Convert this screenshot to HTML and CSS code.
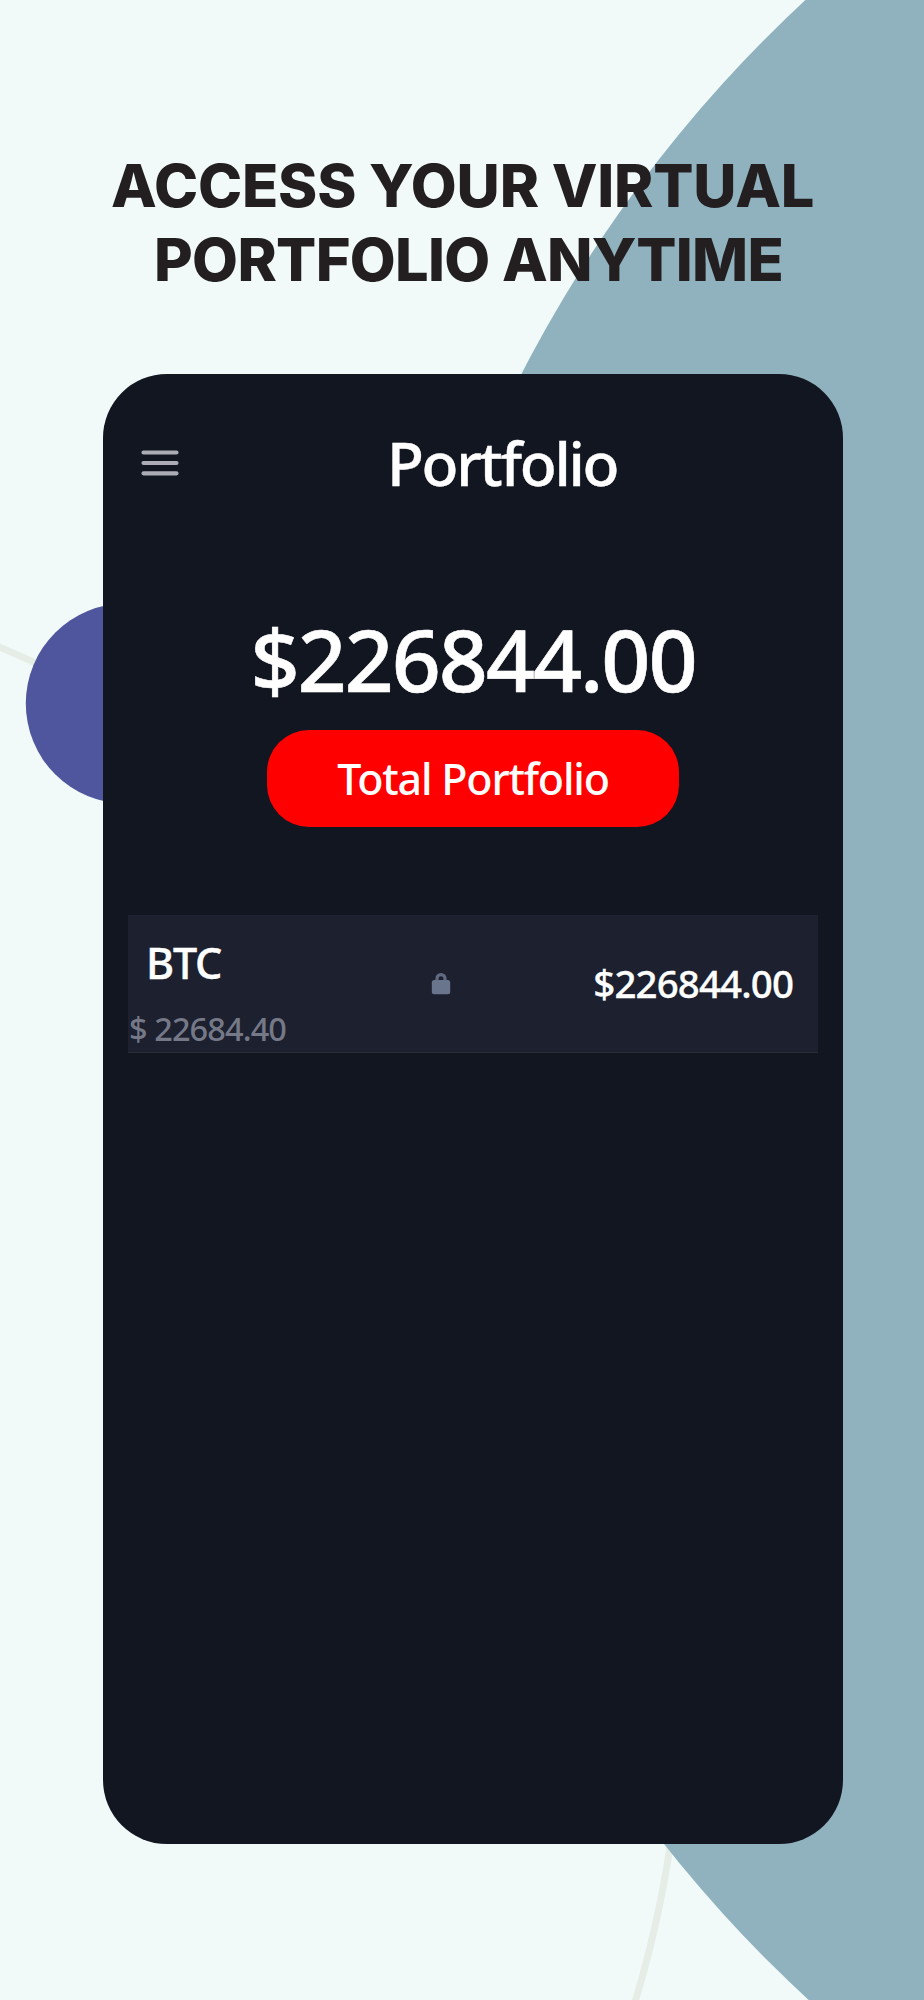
FILE: index.html
```html
<!DOCTYPE html>
<html lang="en">
<head>
    <meta charset="UTF-8">
    <meta name="viewport" content="width=device-width, initial-scale=1.0">
    <title>Virtual Portfolio</title>
    <link rel="stylesheet" href="styles.css">
</head>
<body>
    <div class="promo">
        <!-- Background shapes -->
        <svg class="backdrop" viewBox="0 0 924 2000" aria-hidden="true">
            <circle cx="-438.5" cy="1679" r="1121" fill="none" stroke="#e6ede6" stroke-width="7"/>
            <circle cx="1731.7" cy="998.5" r="1362" fill="#8fb2be"/>
            <circle cx="126" cy="703.5" r="100.2" fill="#50569d"/>
        </svg>

        <h1 class="headline">
            <span class="line line-first">ACCESS YOUR VIRTUAL</span>
            <span class="line line-second">PORTFOLIO ANYTIME</span>
        </h1>

        <!-- Phone screen -->
        <div class="screen">
            <div class="topbar">
                <svg class="menu-icon" width="38" height="28" viewBox="0 0 38 28">
                    <path d="M2.5 3.5h33M2.5 14h33M2.5 24.3h33" stroke="#acacb6" stroke-width="4.2" stroke-linecap="round"/>
                </svg>
                <h2 class="title">Portfolio</h2>
            </div>

            <div class="total">
                <div class="total-amount">$226844.00</div>
                <div class="total-label"><span>Total Portfolio</span></div>
            </div>

            <div class="coin">
                <div class="coin-info">
                    <div class="coin-name">BTC</div>
                    <div class="coin-price">$ 22684.40</div>
                </div>
                <svg class="lock-icon" width="20" height="22" viewBox="0 0 20 22">
                    <path d="M6 8V5.4a4 3.8 0 0 1 8 0V8" fill="none" stroke="#626a80" stroke-width="3.2"/>
                    <rect x="0.8" y="7" width="18.4" height="14.2" rx="2.5" fill="#69758c"/>
                </svg>
                <div class="coin-value">$226844.00</div>
            </div>
        </div>
    </div>
</body>
</html>
```
FILE: styles.css
```css
* {
    margin: 0;
    padding: 0;
    box-sizing: border-box;
}

body {
    width: 924px;
    background-color: #f1faf9;
    font-family: "Noto Sans", "Open Sans", sans-serif;
}

.promo {
    position: relative;
    height: 2000px;
    padding: 149px 81px 156px 103px;
    overflow: hidden;
    display: flex;
    flex-direction: column;
}

.backdrop {
    position: absolute;
    top: 0;
    left: 0;
    width: 924px;
    height: 2000px;
}

.headline {
    position: relative;
    height: 225px;
    font-family: Inter, "Open Sans", sans-serif;
    font-size: 59.5px;
    font-weight: 800;
    line-height: 73.7px;
    color: #231f20;
}

.line {
    display: block;
    white-space: nowrap;
}

.line-first {
    margin-left: 8px;
    letter-spacing: -0.2px;
}

.line-second {
    margin-left: 51px;
    letter-spacing: -0.7px;
}

.screen {
    position: relative;
    flex: 1;
    padding: 56px 25px 0;
    background-color: #121621;
    border-radius: 64px;
    color: #fff;
    line-height: 1;
    white-space: nowrap;
}

.topbar {
    display: flex;
    align-items: center;
    height: 66px;
}

.menu-icon {
    margin-left: 13px;
    margin-bottom: 1px;
}

.title {
    margin-left: 208px;
    font-size: 60.5px;
    font-weight: 500;
    letter-spacing: -2.3px;
    -webkit-text-stroke: 0.4px #fff;
}

.total {
    margin-top: 113px;
    display: flex;
    flex-direction: column;
    align-items: center;
}

.total-amount {
    height: 121px;
    font-size: 86px;
    line-height: 100px;
    font-weight: 500;
    letter-spacing: -2.1px;
    -webkit-text-stroke: 0.6px #fff;
}

.total-label {
    width: 412px;
    height: 97px;
    background-color: #ff0000;
    border-radius: 42px;
    font-size: 43px;
    font-weight: 500;
    line-height: 97px;
    letter-spacing: -1.2px;
    text-align: center;
}

.coin {
    margin-top: 88px;
    height: 138px;
    display: flex;
    background-color: #1c202f;
    border-bottom: 1px solid #2a2e3a;
}

.coin-info {
    width: 303px;
    padding-top: 26px;
}

.coin-name {
    margin-left: 18px;
    height: 72px;
    font-size: 43px;
    font-weight: 500;
    letter-spacing: -1.2px;
    -webkit-text-stroke: 0.4px #fff;
}

.coin-price {
    margin-left: 1px;
    color: #757987;
    font-size: 32.5px;
    font-weight: 500;
    letter-spacing: -0.9px;
}

.lock-icon {
    margin-top: 58px;
}

.coin-value {
    margin-left: auto;
    margin-right: 25px;
    padding-top: 49px;
    font-size: 38.5px;
    font-weight: 500;
    letter-spacing: -0.9px;
    -webkit-text-stroke: 0.3px #fff;
}
```
